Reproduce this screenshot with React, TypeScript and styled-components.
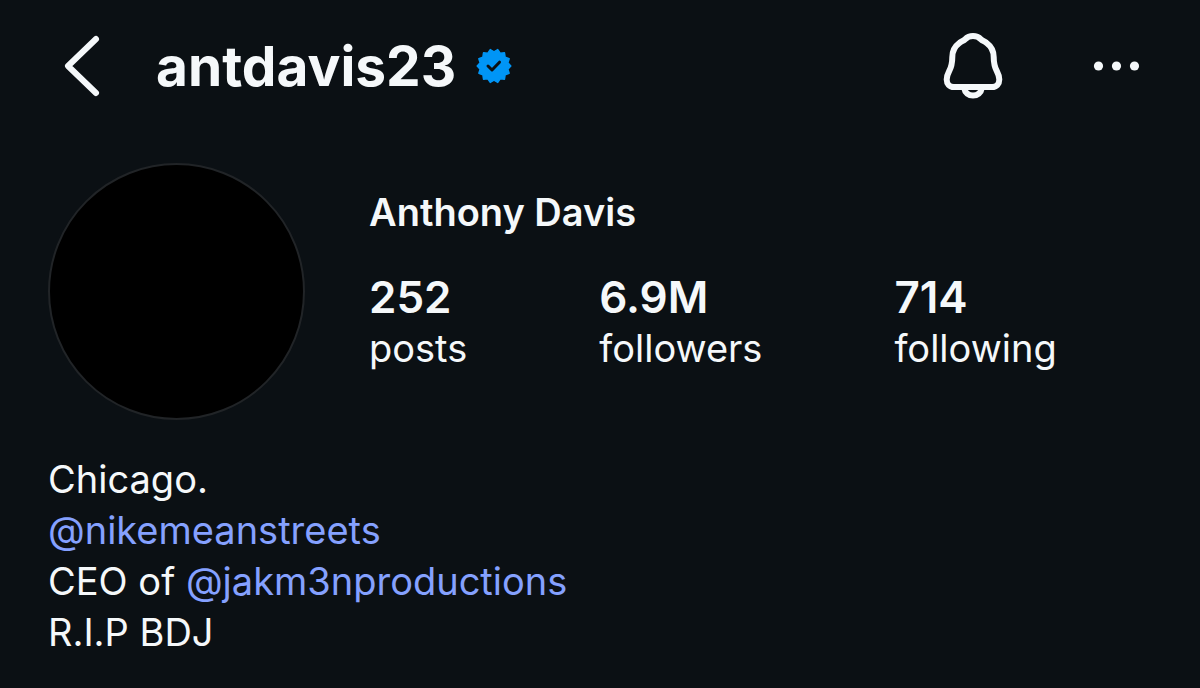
import React from "react";
import styled, { createGlobalStyle } from "styled-components";

const GlobalStyle = createGlobalStyle`
  *, *::before, *::after { box-sizing: border-box; }
  body {
    margin: 0;
    background: #0b1014;
    color: #f5f8fa;
    font-family: Inter, "Liberation Sans", sans-serif;
  }
`;

const Page = styled.main`
  padding: 28px 48px 32px;
`;

const Header = styled.header`
  display: flex;
  align-items: center;
  height: 76px;
`;

const IconButton = styled.button`
  display: flex;
  padding: 0;
  border: 0;
  background: none;
  color: inherit;
  cursor: pointer;
`;

const Title = styled.div`
  display: flex;
  align-items: center;
  gap: 20px;
  margin-left: 40px;
`;

const Username = styled.h1`
  margin: 0;
  font-size: 55px;
  line-height: 68px;
  font-weight: 700;
`;

const Actions = styled.div`
  display: flex;
  align-items: center;
  gap: 87px;
  margin-left: auto;
`;

const Summary = styled.section`
  display: flex;
  align-items: flex-start;
  gap: 64px;
  margin-top: 59px;
`;

const Avatar = styled.div`
  flex: none;
  width: 257px;
  height: 257px;
  border: 2px solid #212427;
  border-radius: 50%;
  background: #000;
`;

const Details = styled.div`
  padding-top: 24px;
`;

const FullName = styled.h2`
  margin: 0;
  font-size: 38px;
  line-height: 51px;
  font-weight: 600;
`;

const Stats = styled.ul`
  display: flex;
  gap: 132px;
  margin: 34px 0 0;
  padding: 0;
  list-style: none;
`;

const Stat = styled.li`
  display: flex;
  flex-direction: column;
`;

const Count = styled.strong`
  font-size: 44px;
  line-height: 51px;
  font-weight: 600;
`;

const Label = styled.span`
  font-size: 38px;
  line-height: 51px;
`;

const Bio = styled.p`
  margin: 34px 0 0;
  font-size: 38px;
  line-height: 51px;
`;

const Mention = styled.a`
  color: #85a1ff;
  text-decoration: none;
`;

const stats = [
  { count: "252", label: "posts" },
  { count: "6.9M", label: "followers" },
  { count: "714", label: "following" },
];

const BackIcon = () => (
  <svg width="68" height="64" viewBox="0 0 68 64" fill="none" aria-hidden="true">
    <path d="M48 5 L20 32 L48 59" stroke="currentColor" strokeWidth="6" strokeLinecap="round" strokeLinejoin="round" />
  </svg>
);

const BADGE_POINTS = 14;
const badgePath =
  Array.from({ length: BADGE_POINTS * 2 }, (_, i) => {
    const angle = (Math.PI * (i + 1)) / BADGE_POINTS;
    const r = i % 2 ? 14.2 : 16.8;
    return `${i ? "L" : "M"}${(18 + r * Math.sin(angle)).toFixed(2)} ${(18 - r * Math.cos(angle)).toFixed(2)}`;
  }).join(" ") + " Z";

const VerifiedBadge = () => (
  <svg width="36" height="36" viewBox="0 0 36 36" role="img" aria-label="Verified">
    <path d={badgePath} fill="#0095f6" stroke="#0095f6" strokeWidth="1.5" strokeLinejoin="round" />
    <path d="M12 18 L16 22 L23.500 14.200" fill="none" stroke="#0b1014" strokeWidth="3" strokeLinecap="round" strokeLinejoin="round" />
  </svg>
);

const BellIcon = () => (
  <svg width="60" height="68" viewBox="0 0 60 68" fill="none" stroke="currentColor" strokeWidth="6" strokeLinejoin="round" aria-hidden="true">
    <path d="M30 4 C26.500 4 24 5.300 22 7.300 C20.500 8.800 18.500 9.200 16.500 10.800 C11.500 14.500 9.300 19.500 9.300 25 C9.300 32.500 8.500 35 6 39.500 C4.500 42.300 3.700 44 3.700 47.500 C3.700 51.800 6.500 55 10.800 55 H49.200 C53.500 55 56.300 51.800 56.300 47.500 C56.300 44 55.500 42.300 54 39.500 C51.500 35 50.700 32.500 50.700 25 C50.700 19.500 48.500 14.500 43.500 10.800 C41.500 9.200 39.500 8.800 38 7.300 C36 5.300 33.500 4 30 4 Z" />
    <path d="M21.300 56.500 C22 60.800 25.500 63.500 30 63.500 C34.500 63.500 38 60.800 38.700 56.500" />
  </svg>
);

const MoreIcon = () => (
  <svg width="62" height="12" viewBox="0 0 62 12" fill="currentColor" aria-hidden="true">
    <circle cx="8.500" cy="6" r="4.600" />
    <circle cx="26.500" cy="6" r="4.600" />
    <circle cx="44.500" cy="6" r="4.600" />
  </svg>
);

export default function App() {
  return (
    <>
      <GlobalStyle />
      <Page>
        <Header>
          <IconButton type="button" aria-label="Back"><BackIcon /></IconButton>
          <Title>
            <Username>antdavis23</Username>
            <VerifiedBadge />
          </Title>
          <Actions>
            <IconButton type="button" aria-label="Notifications"><BellIcon /></IconButton>
            <IconButton type="button" aria-label="More options"><MoreIcon /></IconButton>
          </Actions>
        </Header>
        <Summary>
          <Avatar role="img" aria-label="Profile picture" />
          <Details>
            <FullName>Anthony Davis</FullName>
            <Stats>
              {stats.map(({ count, label }) => (
                <Stat key={label}>
                  <Count>{count}</Count>
                  <Label>{label}</Label>
                </Stat>
              ))}
            </Stats>
          </Details>
        </Summary>
        <Bio>
          Chicago.<br />
          <Mention href="#nikemeanstreets">@nikemeanstreets</Mention><br />
          CEO of <Mention href="#jakm3nproductions">@jakm3nproductions</Mention><br />
          R.I.P BDJ
        </Bio>
      </Page>
    </>
  );
}
